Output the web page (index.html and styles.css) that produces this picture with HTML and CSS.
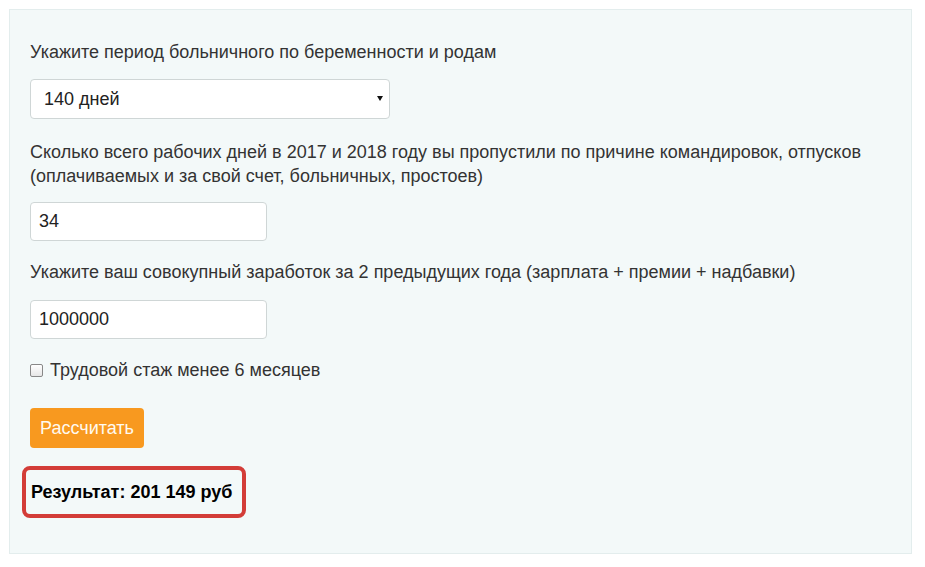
FILE: index.html
```html
<!DOCTYPE html>
<html lang="ru">
<head>
<meta charset="utf-8">
<link rel="stylesheet" href="styles.css">
</head>
<body>
<div class="calc">
  <label class="q q1">Укажите период больничного по беременности и родам</label>
  <div class="select-wrap">
    <select class="field select">
      <option>140 дней</option>
    </select>
    <span class="arrow"></span>
  </div>
  <label class="q q2">Сколько всего рабочих дней в 2017 и 2018 году вы пропустили по причине командировок, отпусков (оплачиваемых и за свой счет, больничных, простоев)</label>
  <input class="field input" type="text" value="34">
  <label class="q q3">Укажите ваш совокупный заработок за 2 предыдущих года (зарплата + премии + надбавки)</label>
  <input class="field input" type="text" value="1000000">
  <label class="check"><span class="box"></span>Трудовой стаж менее 6 месяцев</label>
  <button class="btn">Рассчитать</button>
  <div class="result">Результат: 201 149 руб</div>
</div>
</body>
</html>
```
FILE: styles.css
```css
html, body {
  margin: 0;
  padding: 0;
  background: #fff;
}
body {
  font-family: "Liberation Sans", Arial, sans-serif;
  font-size: 18px;
  line-height: 24px;
  color: #333;
}
.calc {
  margin: 9px 0 0 9px;
  width: 903px;
  height: 545px;
  box-sizing: border-box;
  background: #f3f9f9;
  border: 1px solid #e3eded;
  padding: 30px 20px 0 20px;
  display: flex;
  flex-direction: column;
  align-items: flex-start;
}
.q {
  display: block;
  width: 860px;
}
.q1 { margin-bottom: 15px; }
.q2 { margin-top: 21px; margin-bottom: 14px; }
.q3 { margin-top: 19px; margin-bottom: 16px; }
.field {
  font-family: "Liberation Sans", Arial, sans-serif;
  font-size: 18px;
  color: #222;
  background: #fff;
  border: 1px solid #cfd6d6;
  border-radius: 4px;
  box-sizing: border-box;
  outline: none;
}
.select-wrap {
  position: relative;
  width: 360px;
  height: 40px;
}
.select {
  appearance: none;
  -webkit-appearance: none;
  width: 360px;
  height: 40px;
  padding: 0 13px;
}
.arrow {
  position: absolute;
  right: 7px;
  top: 17px;
  width: 0;
  height: 0;
  border-left: 3px solid transparent;
  border-right: 3px solid transparent;
  border-top: 5px solid #111;
}
.input {
  width: 237px;
  height: 39px;
  padding: 0 8px;
}
.check {
  display: flex;
  align-items: center;
  margin-top: 19px;
  color: #333;
}
.box {
  width: 11px;
  height: 11px;
  border: 1px solid #888;
  border-radius: 2px;
  background: linear-gradient(#fff, #e6e6e6);
  margin: 0 7px 0 0;
}
.btn {
  margin-top: 26px;
  font-family: "Liberation Sans", Arial, sans-serif;
  font-size: 18px;
  color: #fffaf0;
  background: #f8991f;
  border: none;
  border-radius: 4px;
  height: 40px;
  padding: 0;
  width: 114px;
}
.result {
  margin-top: 18px;
  margin-left: -8px;
  width: 224px;
  height: 52px;
  box-sizing: border-box;
  border: 4px solid #d33d38;
  border-radius: 8px;
  padding: 0 0 0 5px;
  display: flex;
  align-items: center;
  font-weight: bold;
  color: #000;
}
```
